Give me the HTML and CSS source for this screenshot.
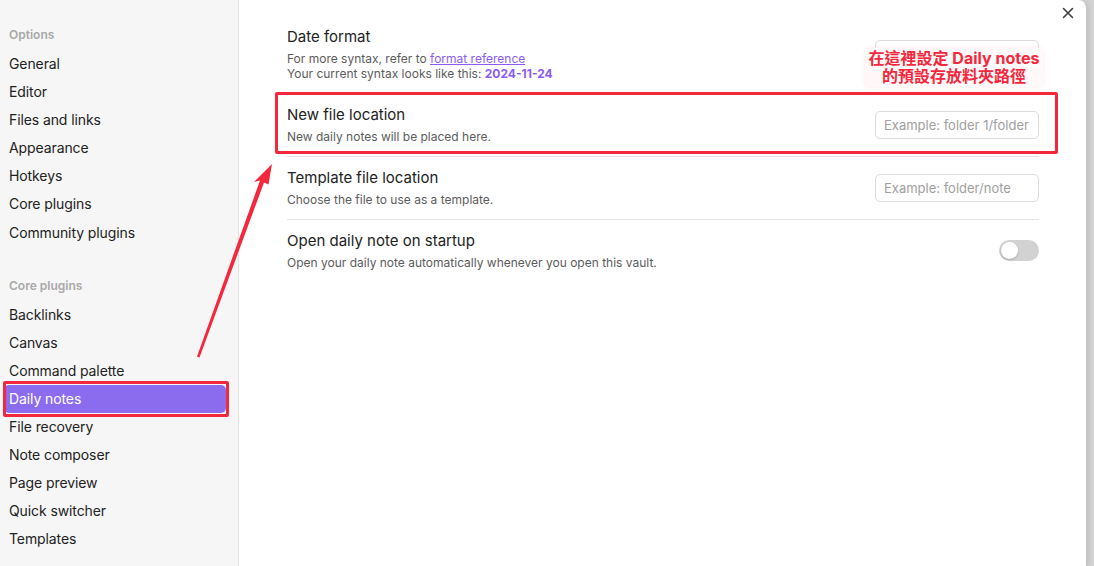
FILE: index.html
```html
<!DOCTYPE html>
<html lang="en">
<head>
<meta charset="utf-8">
<title>Settings - Daily notes</title>
<link rel="stylesheet" href="styles.css">
</head>
<body>
<div class="modal">
  <nav class="sidebar">
    <div class="nav-group">
      <div class="nav-heading">Options</div>
      <div class="nav-item">General</div>
      <div class="nav-item">Editor</div>
      <div class="nav-item">Files and links</div>
      <div class="nav-item">Appearance</div>
      <div class="nav-item">Hotkeys</div>
      <div class="nav-item">Core plugins</div>
      <div class="nav-item">Community plugins</div>
    </div>
    <div class="nav-group">
      <div class="nav-heading">Core plugins</div>
      <div class="nav-item">Backlinks</div>
      <div class="nav-item">Canvas</div>
      <div class="nav-item">Command palette</div>
      <div class="nav-item is-active">Daily notes<span class="mark-box mark-nav"></span></div>
      <div class="nav-item">File recovery</div>
      <div class="nav-item">Note composer</div>
      <div class="nav-item">Page preview</div>
      <div class="nav-item">Quick switcher</div>
      <div class="nav-item">Templates</div>
    </div>
  </nav>
  <main class="content">
    <div class="setting">
      <div class="setting-info">
        <div class="setting-name">Date format</div>
        <div class="setting-desc">For more syntax, refer to <a class="link" href="#">format reference</a><br>Your current syntax looks like this: <b class="accent">2024-11-24</b></div>
      </div>
      <div class="setting-control"><input class="text-input" type="text" placeholder="YYYY-MM-DD"></div>
    </div>
    <div class="setting">
      <div class="setting-info">
        <div class="setting-name">New file location</div>
        <div class="setting-desc">New daily notes will be placed here.</div>
      </div>
      <div class="setting-control"><input class="text-input" type="text" placeholder="Example: folder 1/folder"></div>
      <span class="mark-box mark-setting"></span>
    </div>
    <div class="setting">
      <div class="setting-info">
        <div class="setting-name">Template file location</div>
        <div class="setting-desc">Choose the file to use as a template.</div>
      </div>
      <div class="setting-control"><input class="text-input" type="text" placeholder="Example: folder/note"></div>
    </div>
    <div class="setting">
      <div class="setting-info">
        <div class="setting-name">Open daily note on startup</div>
        <div class="setting-desc">Open your daily note automatically whenever you open this vault.</div>
      </div>
      <div class="setting-control"><div class="toggle"><div class="knob"></div></div></div>
    </div>
    <button class="close" aria-label="Close">
      <svg width="12" height="12" viewBox="0 0 12 12"><path d="M1.5 1.5 L10.5 10.5 M10.5 1.5 L1.5 10.5" stroke="#3f3f3f" stroke-width="1.6" stroke-linecap="round"/></svg>
    </button>
    <div class="callout">在這裡設定 Daily notes<br>的預設存放料夾路徑</div>
  </main>
</div>
<svg class="arrow" width="1094" height="566" viewBox="0 0 1094 566">
  <polygon points="197,356.5 260,180.5 254,182 272,164 268.5,184.5 264,182.5 199.5,357.5" fill="#f4283d"/>
</svg>
</body>
</html>
```

FILE: styles.css
```css
* { box-sizing: border-box; }
html, body { margin: 0; padding: 0; }
body {
  width: 1094px;
  height: 566px;
  overflow: hidden;
  background: #d3d3d3;
  font-family: Inter, "Noto Sans", "Noto Sans CJK TC", sans-serif;
  color: #222;
  position: relative;
}
.modal {
  width: 1087px;
  height: 566px;
  display: flex;
  background: #fff;
  border-right: 1px solid #c4c4c4;
  border-top-right-radius: 8px;
  box-shadow: 2px 0 4px rgba(0,0,0,0.08);
}
.sidebar {
  width: 239px;
  flex: none;
  background: #f6f6f6;
  border-right: 1px solid #e2e2e2;
  padding: 25px 12px 0 4px;
}
.nav-group + .nav-group { margin-top: 29px; }
.nav-heading {
  font-size: 12px;
  font-weight: 600;
  color: #a9a9a9;
  line-height: 20px;
  padding-left: 5px;
  margin-bottom: 5px;
}
.nav-item {
  position: relative;
  height: 28.1px;
  line-height: 28.1px;
  font-size: 14px;
  padding-left: 5px;
  border-radius: 5px;
  color: #222;
  letter-spacing: -0.1px;
}
.nav-item.is-active {
  background: #8b6cef;
  color: #fff;
}
.mark-box {
  position: absolute;
  border: 3px solid #f4283d;
  border-radius: 2px;
  pointer-events: none;
}
.mark-nav {
  left: -1px;
  top: -4px;
  width: 226px;
  height: 36px;
}
.content {
  flex: 1;
  position: relative;
  padding: 16px 47px 0 48px;
}
.setting {
  position: relative;
  display: flex;
  align-items: center;
  padding: 11px 0 12px;
  border-top: 1px solid #e3e3e3;
}
.setting:first-of-type { border-top: none; }
.setting-info { flex: 1; }
.setting-name {
  font-size: 15px;
  line-height: 20px;
  color: #222;
}
.setting-desc {
  margin-top: 4px;
  font-size: 12px;
  line-height: 15px;
  color: #5c5c5c;
}
.link { color: #8a5cf5; text-decoration: underline; }
.accent { color: #8a5cf5; font-weight: 700; }
.setting-control { flex: none; display: flex; align-items: center; }
.text-input {
  width: 164px;
  height: 28px;
  border: 1px solid #dcdcdc;
  border-radius: 5px;
  padding: 0 8px;
  font-family: inherit;
  font-size: 13px;
  color: #222;
  background: #fff;
  outline: none;
}
.text-input::placeholder { color: #a0a0a0; }
.toggle {
  width: 40px;
  height: 21px;
  border-radius: 11px;
  background: #d2d2d2;
  padding: 2px;
}
.knob {
  width: 17px;
  height: 17px;
  border-radius: 50%;
  background: #fff;
  box-shadow: 0 1px 2px rgba(0,0,0,0.2);
}
.mark-setting {
  left: -12px;
  top: -2px;
  width: 783px;
  height: 62px;
}
.close {
  position: absolute;
  top: 7px;
  right: 12px;
  width: 12px;
  height: 12px;
  padding: 0;
  border: none;
  background: transparent;
  display: flex;
}
.callout {
  position: absolute;
  left: 626px;
  top: 48px;
  width: 178px;
  padding: 1px 0 2px;
  text-align: center;
  font-size: 16px;
  line-height: 18px;
  font-weight: 700;
  color: #f4283d;
  background: rgba(255, 248, 249, 0.9);
  border-radius: 5px;
  box-shadow: 0 0 4px rgba(255, 210, 214, 0.5);
}
.arrow {
  position: absolute;
  left: 0;
  top: 0;
  pointer-events: none;
}
```
